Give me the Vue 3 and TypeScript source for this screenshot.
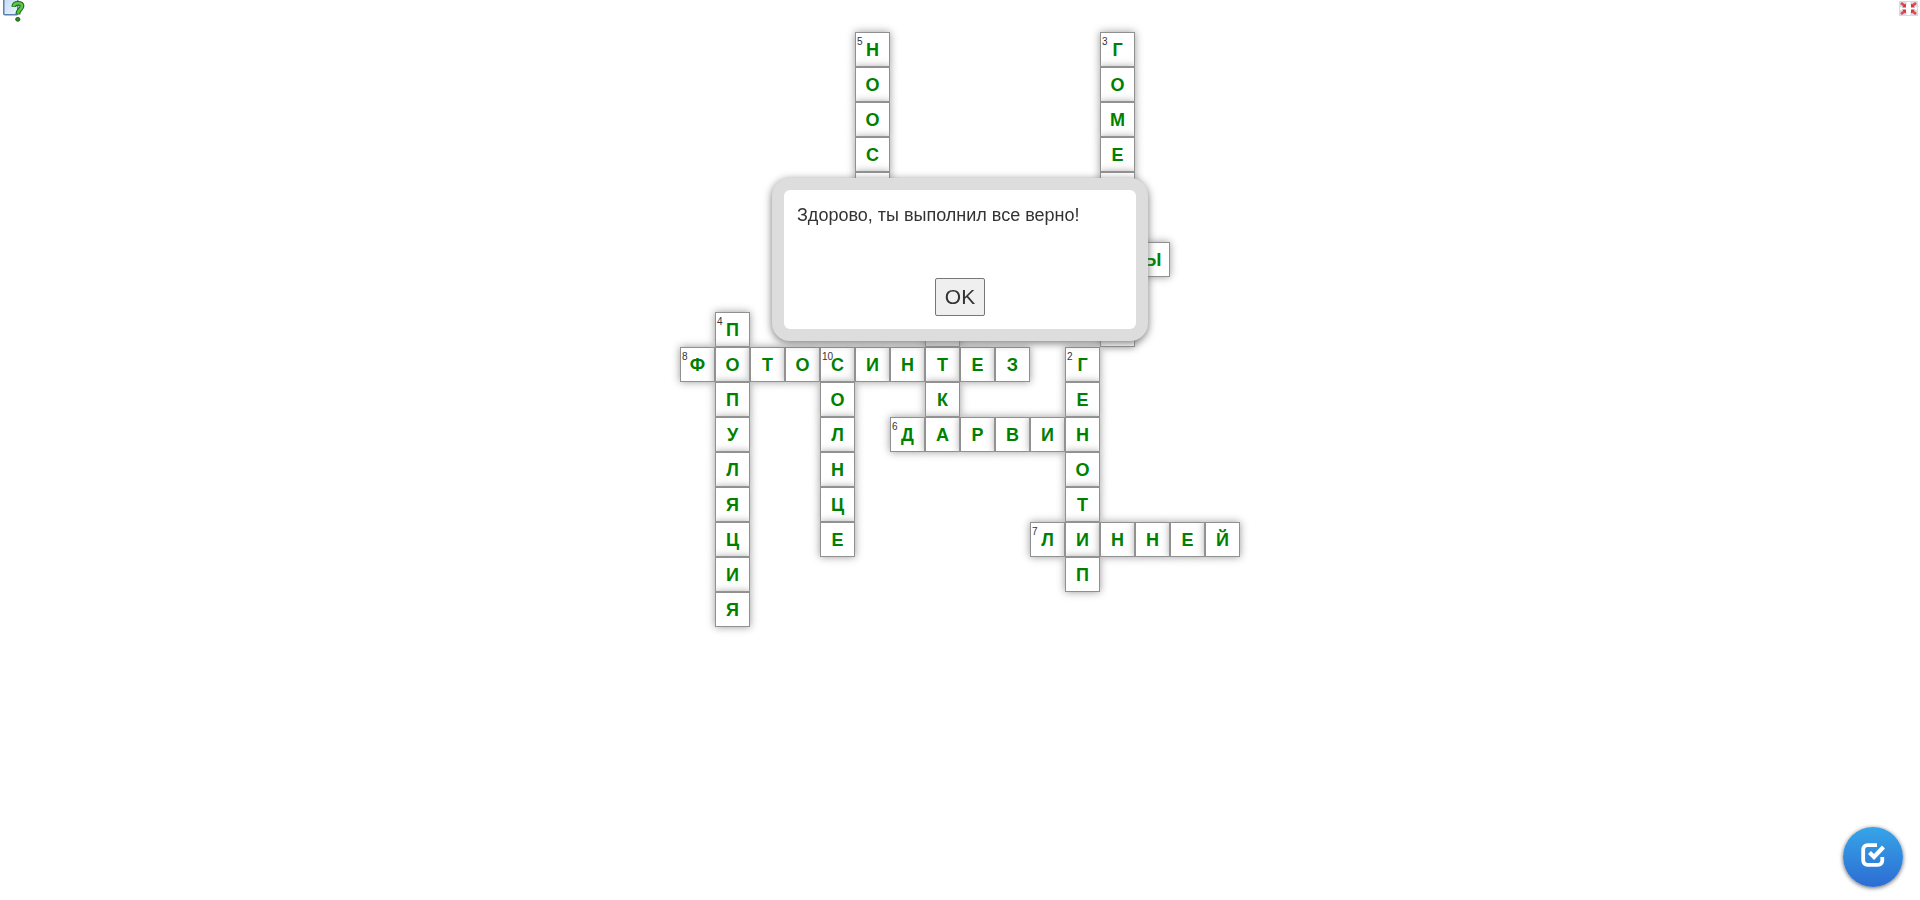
<script setup lang="ts">
import { ref } from 'vue'

interface Cell {
  key: string
  filled: boolean
  letter: string
  clue?: number
}

// "." is a gap, "_" a cell without a letter
const rows: string[] = [
  '.....Н......Г...',
  '.....О......О...',
  '.....О......М...',
  '.....С......Е...',
  '....._......_...',
  '................',
  '.............Ы..',
  '................',
  '.П....._...._...',
  'ФОТОСИНТЕЗ.Г....',
  '.П..О..К...Е....',
  '.У..Л.ДАРВИН....',
  '.Л..Н......О....',
  '.Я..Ц......Т....',
  '.Ц..Е.....ЛИННЕЙ',
  '.И.........П....',
  '.Я..............',
]

const clues: Record<string, number> = {
  '0-5': 5,
  '0-12': 3,
  '8-1': 4,
  '9-0': 8,
  '9-4': 10,
  '9-11': 2,
  '11-6': 6,
  '14-10': 7,
}

const cells: Cell[] = rows.flatMap((row, r) =>
  [...row].map((ch, c) => ({
    key: `${r}-${c}`,
    filled: ch !== '.',
    letter: ch === '.' || ch === '_' ? '' : ch,
    clue: clues[`${r}-${c}`],
  })),
)

const dialogOpen = ref(true)
</script>

<template>
  <div class="app">
    <button class="icon-button help" type="button" aria-label="Помощь">
      <svg width="22" height="22" viewBox="0 0 22 22">
        <defs>
          <linearGradient id="screen" x1="0" y1="0" x2="1" y2="1">
            <stop offset="0" stop-color="#c4dcf4" />
            <stop offset="1" stop-color="#eaf4ff" />
          </linearGradient>
        </defs>
        <rect x="0.75" y="-1" width="14" height="15.750" rx="1" fill="url(#screen)" stroke="#5f7fae" stroke-width="1.500" />
        <path d="M10.800 6.800C10.900 4 12.800 3.300 15 3.300c2.300 0 4 .8 4 2.700 0 3-3.800 3.600-4.200 8.200" fill="none" stroke="#1c6e1a" stroke-width="4.800" />
        <path d="M10.800 6.300C10.900 4 12.800 3.300 15 3.300c2.300 0 4 .8 4 2.700 0 3-3.800 3.600-4.200 7.600" fill="none" stroke="#5cc84a" stroke-width="2.600" />
        <ellipse cx="14.800" cy="19.300" rx="2.100" ry="1.900" fill="#2f8d22" stroke="#1c5e1a" />
      </svg>
    </button>

    <button class="icon-button fullscreen" type="button" aria-label="Полный экран">
      <svg width="19" height="15" viewBox="0 0 19 15">
        <rect width="19" height="15" fill="#d9dbe2" />
        <path d="M7.500 1h4v13h-4zM1 6h17v3H1zM5 4h9v7H5z" fill="#fff" />
        <g stroke="#e5484c" stroke-width="2.800">
          <path d="M2 2l4 3M17 2l-4 3M2 13l4-3M17 13l-4-3" />
        </g>
        <path d="M7 2.500v4H3zM12 2.500v4h4zM7 12.500v-4H3zM12 12.500v-4h4z" fill="#dc3338" />
      </svg>
    </button>

    <main class="board">
      <div v-for="cell in cells" :key="cell.key" :class="{ cell: cell.filled }">
        <span v-if="cell.clue" class="clue">{{ cell.clue }}</span>
        <span v-if="cell.letter">{{ cell.letter }}</span>
      </div>
    </main>

    <div v-if="dialogOpen" class="dialog" role="dialog" aria-labelledby="feedback">
      <p id="feedback" class="message">Здорово, ты выполнил все верно!</p>
      <button class="ok" type="button" @click="dialogOpen = false">OK</button>
    </div>

    <button class="check" type="button" aria-label="Проверить">
      <svg width="24" height="24" viewBox="0 0 24 24" fill="none" stroke="#fff">
        <path d="M16 2.200H6.500A4.300 4.300 0 0 0 2.200 6.500v11A4.300 4.300 0 0 0 6.500 21.800h10.500A4.300 4.300 0 0 0 21.300 17.500V14" stroke-width="3.800" />
        <path d="M8.500 9.500l4.500 4.500L22.500 4" stroke-width="4.200" />
      </svg>
    </button>
  </div>
</template>

<style>
body {
  margin: 0;
  background: #fff;
}
</style>

<style scoped>
.app {
  min-height: 100vh;
  box-sizing: border-box;
  padding-top: 32px;
  font-family: "Liberation Sans", Arial, sans-serif;
  color: #333;
}

button {
  font-family: inherit;
  color: inherit;
  cursor: pointer;
}

.icon-button {
  position: fixed;
  padding: 0;
  border: 0;
  background: none;
}

.icon-button svg {
  display: block;
}

.help {
  top: 0;
  left: 3px;
}

.fullscreen {
  top: 1px;
  right: 2px;
}

.board {
  display: grid;
  grid-template-columns: repeat(16, 35px);
  grid-auto-rows: 35px;
  justify-content: center;
}

.cell {
  position: relative;
  box-sizing: border-box;
  border: 1px solid #909090;
  background: #fff;
  box-shadow: 0 0 8px #999;
  color: #008000;
  font-size: 18px;
  font-weight: bold;
  line-height: 35px;
  text-align: center;
}

.clue {
  position: absolute;
  top: 3px;
  left: 1px;
  color: #333;
  font-size: 10px;
  font-weight: normal;
  line-height: 12px;
}

.dialog {
  position: fixed;
  top: 178px;
  left: 50%;
  transform: translateX(-50%);
  box-sizing: border-box;
  width: 376px;
  padding: 13px;
  border: 12px solid #ddd;
  border-radius: 18px;
  background: #fff;
  box-shadow: 0 2px 8px #777;
  display: flex;
  flex-direction: column;
  align-items: center;
  gap: 51px;
}

.message {
  align-self: stretch;
  margin: 0;
  font-size: 18px;
  line-height: 24px;
}

.ok {
  width: 50px;
  height: 38px;
  padding: 0;
  border: 1px solid #767676;
  border-radius: 2px;
  background: #efefef;
  font-size: 21px;
}

.check {
  position: fixed;
  right: 17px;
  bottom: 13px;
  width: 60px;
  height: 60px;
  padding: 0 0 4px;
  border: 0;
  border-radius: 50%;
  background: linear-gradient(#36a5e8, #2d6cd2);
  box-shadow: 0 1px 4px #666;
  display: flex;
  align-items: center;
  justify-content: center;
}
</style>
